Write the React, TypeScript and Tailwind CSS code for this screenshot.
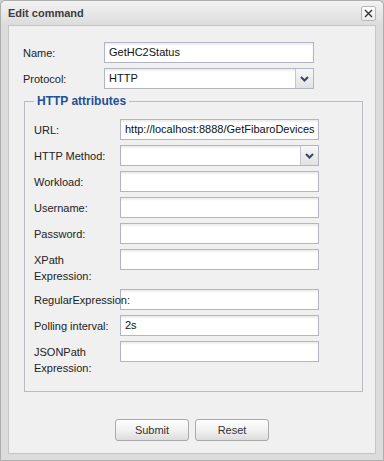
import React from "react";

const inputBox =
    "h-[21px] bg-white border border-[#b3b6c2] shadow-[inset_0_2px_2px_rgba(0,0,0,0.07)] text-[11px] text-[#111] leading-[19px] pl-[4px] whitespace-nowrap overflow-hidden";

function TextField({ value = "", w }: { value?: string; w: string }) {
    return <div className={`${inputBox} ${w}`}>{value}</div>;
}

function SelectField({ value = "", w }: { value?: string; w: string }) {
    return (
        <div className={`${inputBox} ${w} flex !pl-0`}>
            <span className="flex-1 pl-[4px]">{value}</span>
            <span className="w-[18px] h-full border-l border-[#c3c5cf] bg-gradient-to-b from-[#f7f7f7] to-[#e2e2e2] flex items-center justify-center">
                <svg width="9" height="6" viewBox="0 0 9 6">
                    <path d="M1 1 L4.5 4.5 L8 1" fill="none" stroke="#33476b" strokeWidth="2" />
                </svg>
            </span>
        </div>
    );
}

function Label({ children }: { children: React.ReactNode }) {
    return (
        <div className="relative z-10 pt-[3px] leading-[16px] text-[11px] text-[#222] whitespace-nowrap">
            {children}
        </div>
    );
}

export default function App() {
    return (
        <div className="w-[384px] h-[461px] bg-[#d0d0d0] font-['Liberation_Sans',Arial,sans-serif]">
            <div className="w-full h-full flex flex-col border border-[#aeaeae] rounded-t-[5px] bg-[#dcdcdc] px-[7px] pb-[6px]">
                {/* Title bar */}
                <div className="h-[24px] -mx-[7px] px-[7px] rounded-t-[5px] bg-gradient-to-b from-[#f3f3f3] to-[#dcdcdc] flex items-center justify-between">
                    <span className="text-[11px] font-bold text-[#3d3d3d]">Edit command</span>
                    <span className="w-[15px] h-[15px] mt-[1px] bg-gradient-to-b from-white to-[#ececec] border border-[#b8b8b8] rounded-[2px] flex items-center justify-center">
                        <svg width="9" height="9" viewBox="0 0 9 9">
                            <path d="M1 1 L8 8 M8 1 L1 8" stroke="#333" strokeWidth="1.4" />
                        </svg>
                    </span>
                </div>

                {/* Content panel */}
                <div className="flex-1 border border-[#c6c6c6] bg-[#f0f0f0] pl-[14px] pt-[16px] flex flex-col">
                    <div className="grid grid-cols-[81px_210px] gap-y-[5px] items-start">
                        <Label>Name:</Label>
                        <TextField value="GetHC2Status" w="w-[210px]" />
                        <Label>Protocol:</Label>
                        <SelectField value="HTTP" w="w-[210px]" />
                    </div>

                    <fieldset className="mt-[4px] ml-px w-[339px] border border-[#b9bac4] pl-[9px] pt-[10px] pb-[15px]">
                        <legend className="px-[3px] text-[12px] leading-[16px] font-bold text-[#1f4f96]">
                            HTTP attributes
                        </legend>
                        <div className="grid grid-cols-[86px_199px] gap-y-[5px] items-start">
                            <Label>URL:</Label>
                            <TextField value="http://localhost:8888/GetFibaroDevices" w="w-[199px]" />
                            <Label>HTTP Method:</Label>
                            <SelectField w="w-[199px]" />
                            <Label>Workload:</Label>
                            <TextField w="w-[199px]" />
                            <Label>Username:</Label>
                            <TextField w="w-[199px]" />
                            <Label>Password:</Label>
                            <TextField w="w-[199px]" />
                            <Label>
                                XPath
                                <br />
                                Expression:
                            </Label>
                            <TextField w="w-[199px]" />
                            <Label>RegularExpression:</Label>
                            <TextField w="w-[199px]" />
                            <Label>Polling interval:</Label>
                            <TextField value="2s" w="w-[199px]" />
                            <Label>
                                JSONPath
                                <br />
                                Expression:
                            </Label>
                            <TextField w="w-[199px]" />
                        </div>
                    </fieldset>

                    <div className="mt-[27px] flex justify-center gap-[6px] pr-[14px]">
                        {["Submit", "Reset"].map((t) => (
                            <button
                                key={t}
                                className="w-[74px] h-[22px] rounded-[3px] border border-[#a9a9a9] bg-gradient-to-b from-[#fdfdfd] via-[#f2f2f2] to-[#dcdcdc] text-[11px] text-[#333]"
                            >
                                {t}
                            </button>
                        ))}
                    </div>
                </div>
            </div>
        </div>
    );
}
